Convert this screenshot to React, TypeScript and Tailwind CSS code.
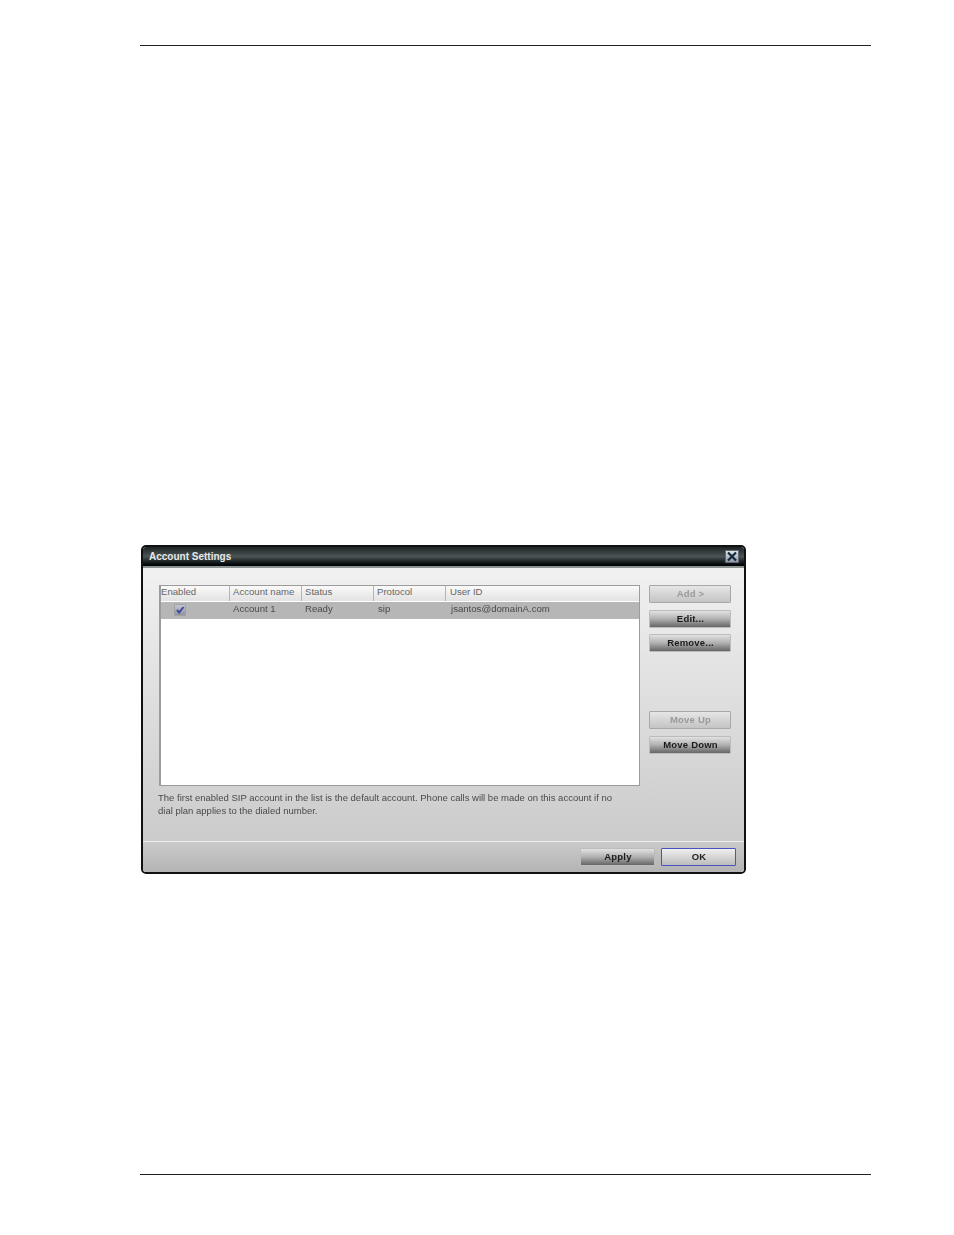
function Btn({ label, off, primary, w = "w-[82px]", className = "" }: { label: string; off?: boolean; primary?: boolean; w?: string; className?: string }) {
  const look = off
    ? "border-[#a8a8a8] bg-gradient-to-b from-[#e6e6e6] to-[#c4c4c4] text-[#9a9a9a]"
    : primary
    ? "border-[#4a52c0] bg-gradient-to-b from-[#efefef] to-[#bcbcbc] text-[#222]"
    : "border-[#bcbcbc] bg-gradient-to-b from-[#e2e2e2] via-[#b0b0b0] to-[#666666] text-[#1a1a1a]";
  return (
    <button className={`${w} h-[18px] flex items-center justify-center pl-[1px] pb-[1px] rounded-[1px] border text-[9.5px] font-bold tracking-[0.2px] leading-none ${look} ${className}`}>
      {label}
    </button>
  );
}

const cols = [
  { t: "Enabled", c: "w-[69px] border-r border-[#b4b4b4]" },
  { t: "Account name", c: "w-[72px] pl-[3px] border-r border-[#b4b4b4]" },
  { t: "Status", c: "w-[72px] pl-[3px] border-r border-[#b4b4b4]" },
  { t: "Protocol", c: "w-[72px] pl-[3px] border-r border-[#b4b4b4]" },
  { t: "User ID", c: "flex-1 pl-[4px]" },
];

export default function App() {
  return (
    <div className="h-[1235px] w-[954px] bg-white flex flex-col pl-[140px] pr-[83px] font-['Liberation_Sans',Arial,sans-serif]">
      <div className="mt-[45px] h-px bg-[#222]" />
      <div className="mt-[499px] ml-px w-[605px] h-[329px] flex flex-col overflow-hidden rounded-[5px] border-2 border-[#111] blur-[0.4px]">
        <div className="h-[21px] shrink-0 flex items-center justify-between pl-[6px] pr-[5px] pb-[1px] bg-gradient-to-b from-[#1e2424] via-[#4b5555] to-[#010203] border-b-2 border-[#8b9493]">
          <span className="text-[10px] font-bold text-[#e8e8e8]">Account Settings</span>
          <span className="w-[14px] h-[13px] flex items-center justify-center bg-gradient-to-b from-[#dfe6ea] to-[#8d9aa6] border border-[#667]">
            <svg viewBox="0 0 12 11" className="w-[12px] h-[11px]">
              <path d="M2 1.5 L10 9.5 M10 1.5 L2 9.5" stroke="#14263c" strokeWidth="2.2" fill="none" />
            </svg>
          </span>
        </div>
        <div className="flex-1 flex flex-col">
          <div className="h-[273px] shrink-0 pl-[16px] pr-[12px] pt-[17px] flex gap-[9px] bg-gradient-to-b from-[#f1f1f1] to-[#cbcbcb]">
            <div className="w-[481px] flex flex-col">
              <div className="h-[201px] flex flex-col bg-white border border-[#9c9c9c] border-l-2">
                <div className="h-[15px] shrink-0 flex bg-gradient-to-b from-[#fafafa] to-[#e2e2e2]">
                  {cols.map((c) => (
                    <div key={c.t} className={`${c.c} flex items-center pb-[2px] text-[9.6px] text-[#666]`}>
                      {c.t}
                    </div>
                  ))}
                </div>
                <div className="mt-px h-[17px] shrink-0 flex items-center pb-[2px] bg-[#b6b6b6] text-[9.6px] text-[#4a4a4a]">
                  <div className="w-[69px] pl-[13px]">
                    <span className="w-[12px] h-[12px] flex items-center justify-center rounded-[1px] bg-gradient-to-b from-[#c4c6d0] to-[#8f93a4] border border-[#a0a0a0]">
                      <svg viewBox="0 0 10 10" className="w-[10px] h-[10px]">
                        <path d="M2 5 L4.2 7.5 L8.5 2" stroke="#4048a0" strokeWidth="2" fill="none" />
                      </svg>
                    </span>
                  </div>
                  <div className="w-[72px] pl-[3px]">Account 1</div>
                  <div className="w-[72px] pl-[3px]">Ready</div>
                  <div className="w-[72px] pl-[4px]">sip</div>
                  <div className="flex-1 pl-[5px]">jsantos@domainA.com</div>
                </div>
              </div>
              <p className="mt-[5px] text-[9.5px] leading-[13px] text-[#4a4a4a] w-[470px] -ml-px">
                The first enabled SIP account in the list is the default account. Phone calls will be made on this account if no dial plan applies to the dialed number.
              </p>
            </div>
            <div className="flex flex-col">
              <Btn label="Add >" off />
              <Btn label="Edit..." className="mt-[7px]" />
              <Btn label="Remove..." className="mt-[6px]" />
              <Btn label="Move Up" off className="mt-[59px]" />
              <Btn label="Move Down" className="mt-[7px]" />
            </div>
          </div>
          <div className="flex-1 border-t border-[#ececec] flex justify-end items-start gap-[6px] pr-[8px] pt-[6px] bg-gradient-to-b from-[#cacaca] to-[#b4b4b4]">
            <Btn label="Apply" w="w-[75px]" />
            <Btn label="OK" w="w-[75px]" primary />
          </div>
        </div>
      </div>
      <div className="mt-[300px] h-px bg-[#222]" />
    </div>
  );
}
